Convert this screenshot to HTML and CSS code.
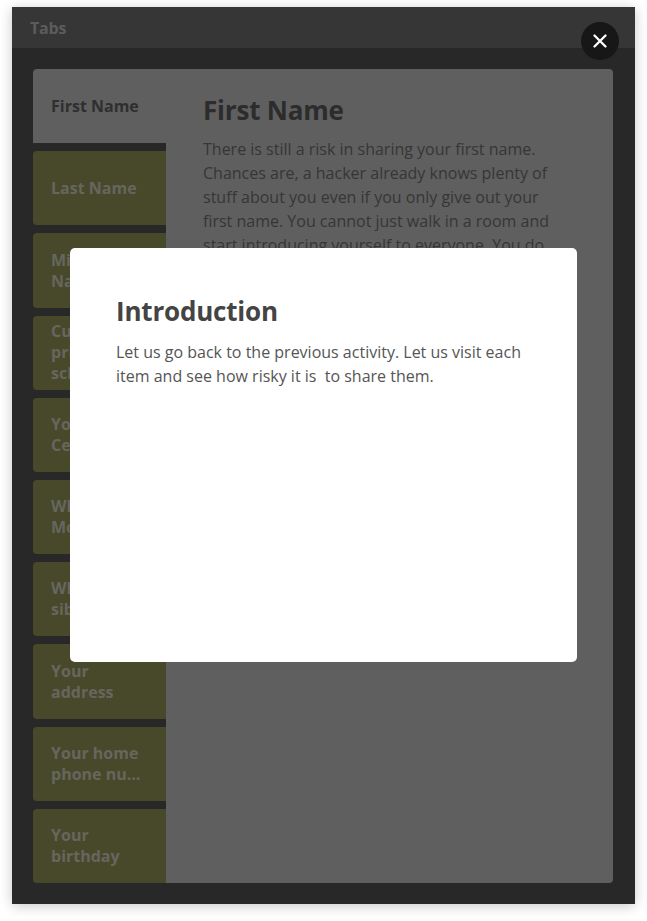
FILE: index.html
```html
<!DOCTYPE html>
<html>
<head>
<meta charset="utf-8">
<link rel="stylesheet" href="styles.css">
</head>
<body>
<div class="window">
  <div class="titlebar">Tabs</div>
  <div class="body">
    <div class="panel">
      <div class="tabs">
        <div class="tab active"><span>First Name</span></div>
        <div class="tab"><span>Last Name</span></div>
        <div class="tab"><span>Middle Name</span></div>
        <div class="tab tall"><span>Current primary school</span></div>
        <div class="tab"><span>Your Cellphone number</span></div>
        <div class="tab"><span>What's Mother's maiden name</span></div>
        <div class="tab"><span>Who's your siblings</span></div>
        <div class="tab"><span>Your address</span></div>
        <div class="tab break"><span>Your home phone number</span></div>
        <div class="tab"><span>Your birthday</span></div>
      </div>
      <div class="content">
        <h2>First Name</h2>
        <p>There is still a risk in sharing your first name. Chances are, a hacker already knows plenty of stuff about you even if you only give out your first name. You cannot just walk in a room and start introducing yourself to everyone. You do not know who they are.</p>
      </div>
    </div>
  </div>
  <button class="close" aria-label="Close">
    <svg width="16" height="16" viewBox="0 0 16 16"><path d="M2.5 2.5L13.5 13.5M13.5 2.5L2.5 13.5" stroke="#fff" stroke-width="2.3" stroke-linecap="round"/></svg>
  </button>
  <div class="modal">
    <h1>Introduction</h1>
    <p>Let us go back to the previous activity. Let us visit each item and see how risky it is&nbsp; to share them.</p>
  </div>
</div>
</body>
</html>
```

FILE: styles.css
```css
html, body {
  margin: 0;
  padding: 0;
  background: #ffffff;
  font-family: "Open Sans", "Noto Sans", sans-serif;
}
body {
  padding: 7px 12px 17px 12px;
}
.window {
  position: relative;
  width: 623px;
  height: 897px;
  background: #282828;
  box-shadow: 0 2px 12px rgba(0,0,0,0.22);
  display: flex;
  flex-direction: column;
}
.titlebar {
  height: 41px;
  background: #363636;
  color: #5c5c5c;
  font-weight: 700;
  font-size: 16px;
  line-height: 42px;
  padding-left: 18px;
  letter-spacing: -0.2px;
}
.body {
  flex: 1;
  padding: 21px 22px 21px 21px;
  display: flex;
}
.panel {
  flex: 1;
  display: flex;
  background: #5f5f5f;
  border-radius: 4px;
  overflow: hidden;
}
.tabs {
  width: 133px;
  display: flex;
  flex-direction: column;
  gap: 8px;
  background: #282828;
}
.tab {
  flex: 1;
  background: #47492a;
  border-radius: 4px 0 0 4px;
  display: flex;
  align-items: center;
  padding: 0 20px 0 18px;
  color: #66665e;
  font-weight: 700;
  font-size: 16px;
  line-height: 21px;
}
.tab span {
  display: -webkit-box;
  -webkit-line-clamp: 2;
  -webkit-box-orient: vertical;
  overflow: hidden;
}
.tab.tall span {
  -webkit-line-clamp: 3;
}
.tab.break span {
  word-break: break-all;
}
.tab.active {
  background: #5f5f5f;
  color: #2f2f2f;
  border-radius: 4px 0 0 0;
}
.content {
  flex: 1;
  padding: 23px 50px 0 37px;
}
.content h2 {
  margin: 0 0 9px;
  font-size: 26px;
  line-height: 36px;
  font-weight: 700;
  color: #2c2c2c;
  letter-spacing: -0.2px;
}
.content p {
  margin: 0;
  font-size: 16px;
  line-height: 24px;
  color: #363636;
}
.close {
  position: absolute;
  top: 15px;
  right: 16px;
  width: 38px;
  height: 38px;
  border-radius: 50%;
  background: #171717;
  border: none;
  padding: 0;
  display: flex;
  align-items: center;
  justify-content: center;
}
.modal {
  position: absolute;
  left: 58px;
  top: 241px;
  width: 507px;
  height: 414px;
  box-sizing: border-box;
  background: #ffffff;
  border-radius: 5px;
  padding: 45px 46px;
}
.modal h1 {
  margin: 0 0 11px;
  font-size: 26px;
  line-height: 36px;
  font-weight: 700;
  color: #444444;
  letter-spacing: -0.2px;
}
.modal p {
  margin: 0;
  font-size: 16px;
  line-height: 24px;
  color: #555555;
}
```
